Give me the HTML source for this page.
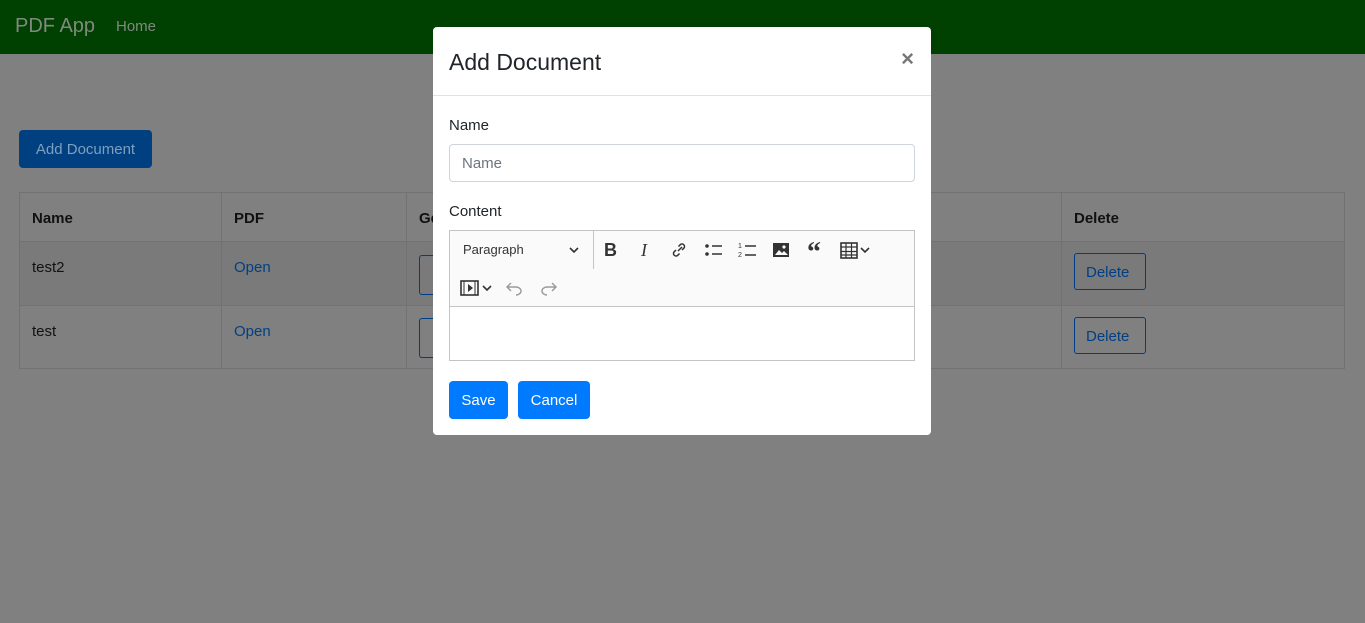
<!DOCTYPE html>
<html><head><style>
body{margin:0;width:1365px;height:623px;background:#808080;font-family:"Liberation Sans",sans-serif;position:relative;overflow:hidden;color:#121212}
.nav{position:absolute;left:0;top:0;width:1365px;height:54px;background:#004000}
.brand{position:absolute;left:15px;top:15px;font-size:20px;color:#7f8a7f}
.home{position:absolute;left:116px;top:18px;font-size:15px;color:#7f8a7f}
.addbtn{position:absolute;left:19px;top:130px;width:133px;height:38px;background:#004080;border-radius:4px;color:#7f9fbf;font-size:15px;line-height:40px;text-align:center}
table{position:absolute;left:19px;top:192px;width:1326px;border-collapse:collapse;font-size:15px}
td,th{border:1px solid #727272;padding:0 12px;text-align:left;vertical-align:top}
th{height:46px;vertical-align:middle;color:#111;padding-top:2px}
td{padding-top:17px}
tr.r1 td{height:46px;background:#7a7a7a}
tr.r2 td{height:45px}
a{color:#003f85;text-decoration:none}
.ob{display:inline-block;border:1px solid #003f85;border-radius:3px;padding:10px 11px 8px;width:48px;color:#003f85;margin-top:-6px}
.modal{position:absolute;left:433px;top:27px;width:498px;height:408px;background:#fff;border-radius:4px;color:#212529}
.mh{height:68px;border-bottom:1px solid #dee2e6;position:relative}
.mh h5{margin:0;position:absolute;left:16px;top:22px;font-size:23px;font-weight:500}
.x{position:absolute;right:17px;top:19px;font-size:22px;color:#777;font-weight:bold}
.lbl{position:absolute;left:16px;font-size:15px}
.inp{position:absolute;left:16px;top:117px;width:466px;height:38px;border:1px solid #ced4da;border-radius:4px;box-sizing:border-box;padding-left:12px;line-height:38px;color:#6c757d;font-size:15px}
.ed{position:absolute;left:16px;top:203px;width:466px;height:131px;border:1px solid #c4c4c4;box-sizing:border-box}
.tb{height:75px;background:#fafafa;border-bottom:1px solid #c4c4c4;position:relative}
.btn{position:absolute;top:354px;height:38px;background:#007bff;color:#fff;border-radius:4px;font-size:15px;line-height:40px;text-align:center}
svg{position:absolute}
</style></head><body>
<div class="nav"><div class="brand">PDF App</div><div class="home">Home</div></div>
<div class="addbtn">Add Document</div>
<table>
<tr><th style="width:177px">Name</th><th style="width:160px">PDF</th><th style="width:630px">Ge</th><th>Delete</th></tr>
<tr class="r1"><td>test2</td><td><a>Open</a></td><td></td><td><span class="ob">Delete</span></td></tr>
<tr class="r2"><td>test</td><td><a>Open</a></td><td></td><td><span class="ob">Delete</span></td></tr>
</table>
<div style="position:absolute;left:419px;top:255px;width:14px;height:38px;border:1px solid #003f85;border-right:none;border-radius:3px 0 0 3px"></div>
<div style="position:absolute;left:419px;top:318px;width:14px;height:38px;border:1px solid #003f85;border-right:none;border-radius:3px 0 0 3px"></div>
<div class="modal">
<div class="mh"><h5>Add Document</h5><div class="x">×</div></div>
<div class="lbl" style="top:90px">Name</div>
<div class="inp">Name</div>
<div class="lbl" style="top:176px">Content</div>
<div class="ed"><div class="tb">
<div style="position:absolute;left:13px;top:11px;font-size:13px;color:#333">Paragraph</div>
<svg style="left:119px;top:15px" width="10" height="8"><path d="M1 2l4 4 4-4" stroke="#333" stroke-width="1.6" fill="none"/></svg>
<div style="position:absolute;left:143px;top:0;width:1px;height:38px;background:#c4c4c4"></div>
<div style="position:absolute;left:154px;top:9px;font-size:18px;font-weight:bold;color:#333">B</div>
<div style="position:absolute;left:191px;top:9px;font-size:18px;font-style:italic;font-family:'Liberation Serif';color:#333">I</div>
<svg style="left:220px;top:10px" width="18" height="18"><path d="M8 10l4-4M6 9l-2 2a2.5 2.5 0 0 0 3.5 3.5l2-2M12 9l2-2a2.5 2.5 0 0 0-3.5-3.5l-2 2" stroke="#333" stroke-width="1.5" fill="none"/></svg>
<svg style="left:254px;top:11px" width="20" height="16"><circle cx="3" cy="4" r="1.8" fill="#333"/><circle cx="3" cy="12" r="1.8" fill="#333"/><path d="M8 4h10M8 12h10" stroke="#333" stroke-width="1.6"/></svg>
<svg style="left:288px;top:10px" width="20" height="18"><text x="0" y="7" font-size="7" fill="#333">1</text><text x="0" y="16" font-size="7" fill="#333">2</text><path d="M7 5h11M7 14h11" stroke="#333" stroke-width="1.6"/></svg>
<svg style="left:322px;top:11px" width="18" height="16"><rect x="1" y="1" width="16" height="14" fill="#333"/><path d="M3 13l4-5 3 3 2-2 4 4z" fill="#fafafa"/><circle cx="12" cy="5" r="1.6" fill="#fafafa"/></svg>
<div style="position:absolute;left:357px;top:6px;font-size:28px;font-weight:bold;color:#333;font-family:'Liberation Serif'">“</div>
<svg style="left:390px;top:11px" width="36" height="17"><rect x="1" y="1" width="16" height="15" fill="none" stroke="#333" stroke-width="1.6"/><path d="M1 5h16M1 9.5h16M1 13h16M6 1v15M11.5 1v15" stroke="#333" stroke-width="1.2"/><path d="M21 6l4 4 4-4" stroke="#333" stroke-width="1.6" fill="none"/></svg>
<svg style="left:10px;top:49px" width="34" height="16"><rect x="1" y="1" width="17" height="14" fill="none" stroke="#333" stroke-width="1.6"/><path d="M4 1v14M15 1v14" stroke="#333" stroke-width="1"/><path d="M8 4v8l5-4z" fill="#333"/><path d="M23 6l4 4 4-4" stroke="#333" stroke-width="1.6" fill="none"/></svg>
<svg style="left:55px;top:49px" width="20" height="16"><path d="M6 3L2 7l4 4M2 7h9a5 4 0 0 1 0 8" stroke="#999" stroke-width="1.4" fill="none"/></svg>
<svg style="left:88px;top:49px" width="20" height="16"><path d="M14 3l4 4-4 4M18 7H9a5 4 0 0 0 0 8" stroke="#999" stroke-width="1.4" fill="none"/></svg>
</div></div>
<div class="btn" style="left:16px;width:59px">Save</div>
<div class="btn" style="left:85px;width:72px">Cancel</div>
</div>
</body></html>
